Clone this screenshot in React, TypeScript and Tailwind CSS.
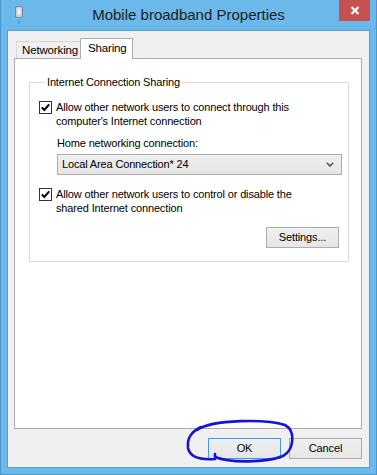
import { ReactNode } from 'react'

const font = { fontFamily: '"Liberation Sans", Arial, sans-serif' }

const CheckBox = () => (
  <div className="w-[13px] h-[13px] shrink-0 border border-[#333333] bg-white flex items-center justify-center">
    <svg width="11" height="11" viewBox="0 0 11 11">
      <path d="M1.8 5.4 L4.3 8 L9.2 2.4" fill="none" stroke="#000" strokeWidth="2" />
    </svg>
  </div>
)

const CheckRow = ({ children }: { children: ReactNode }) => (
  <div className="flex gap-[4px]">
    <div className="pt-[1px]">
      <CheckBox />
    </div>
    <div className="leading-[14px]">{children}</div>
  </div>
)

const Button = ({ label, focused }: { label: string; focused?: boolean }) => (
  <div
    className={
      'w-[73px] h-[21px] flex items-center justify-center border bg-gradient-to-b from-[#f0f0f0] to-[#e5e5e5] ' +
      (focused ? 'border-[#3c9af0]' : 'border-[#acacac]')
    }
  >
    {label}
  </div>
)

const App = () => {
  return (
    <div
      className="relative w-[377px] h-[475px] bg-[#6bb8eb] border border-t-0 border-[#4f96c8] flex flex-col text-[11px] tracking-[-0.15px] text-black"
      style={font}
    >
      <div className="h-[30px] grid grid-cols-[1fr_auto_1fr] items-start">
        <div className="pl-[12px] pt-[5px]">
          <svg width="12" height="19" viewBox="0 0 12 19">
            <rect x="2.5" y="1.5" width="7" height="11" rx="1.5" fill="#c9cfd8" stroke="#7c8594" strokeWidth="1" />
            <rect x="4.5" y="3.5" width="3" height="6" fill="#eef1f5" />
            <rect x="5.5" y="12" width="1" height="7" fill="#2aa0e6" />
            <rect x="4.5" y="13" width="3" height="2" fill="#6fc6f5" />
          </svg>
        </div>
        <div className="pt-[6px] text-[15px] tracking-normal text-[#1e1e1e] leading-[18px]">
          Mobile broadband Properties
        </div>
        <div className="flex justify-end pr-[6px]">
          <div className="w-[31px] h-[21px] bg-[#c75050] flex items-center justify-center">
            <svg width="10" height="9" viewBox="0 0 10 9">
              <path d="M1.5 1 L8.5 8 M8.5 1 L1.5 8" stroke="#fff" strokeWidth="2.2" />
            </svg>
          </div>
        </div>
      </div>

      <div className="flex-1 mx-[6px] mb-[6px] border border-[#5a9fd4] bg-[#f0f0f0] flex flex-col pt-[7px] pl-[6px] pr-[7px] pb-[8px]">
        <div className="flex items-end pl-[2px] h-[21px] -mb-px">
          <div className="h-[18px] w-[64px] border border-[#d9d9d9] border-r-0 bg-[#f0f0f0] pl-[5px] leading-[17px] text-[11.5px]">
            Networking
          </div>
          <div className="relative z-10 h-[21px] w-[53px] border border-b-0 border-[#acacac] bg-white pl-[7px] pt-[2px] leading-[15px] text-[11.5px]">
            Sharing
          </div>
        </div>
        <div className="flex-1 border border-[#acacac] bg-white pl-[14px] pr-[12px] pt-[17px]">
          <fieldset className="border border-[#dcdcdc] pl-[9px] pr-[6px] pb-[13px]">
            <legend className="ml-[6px] px-[2px] leading-[13px]">Internet Connection Sharing</legend>
            <div className="mt-[11px]">
              <CheckRow>
                Allow other network users to connect through this
                <br />
                computer's Internet connection
              </CheckRow>
            </div>
            <div className="ml-[18px] mt-[8px] leading-[14px]">Home networking connection:</div>
            <div className="ml-[18px] mt-[4px] h-[21px] border border-[#acacac] bg-gradient-to-b from-[#f0f0f0] to-[#e5e5e5] flex items-center justify-between pl-[4px] pr-[7px]">
              <span>Local Area Connection* 24</span>
              <svg width="8" height="5" viewBox="0 0 8 5">
                <path d="M0.8 0.8 L4 4 L7.2 0.8" fill="none" stroke="#555" strokeWidth="1.6" />
              </svg>
            </div>
            <div className="mt-[12px]">
              <CheckRow>
                Allow other network users to control or disable the
                <br />
                shared Internet connection
              </CheckRow>
            </div>
            <div className="flex justify-end mt-[12px] pr-[3px]">
              <Button label="Settings..." />
            </div>
          </fieldset>
        </div>
        <div className="flex justify-end gap-[8px] mt-[9px]">
          <Button label="OK" focused />
          <Button label="Cancel" />
        </div>
      </div>

      <svg className="absolute left-0 top-0 pointer-events-none" width="377" height="475" viewBox="0 0 377 475">
        <path
          d="M196 430 C212 419 266 419 284 425 C295 431 293 450 282 456 C265 463 228 463 214 457 L214 454 M214 459 C200 460 189 458 187 448 C186 438 190 432 200 427"
          fill="none"
          stroke="#1414d2"
          strokeWidth="2.6"
          strokeLinecap="round"
          strokeLinejoin="round"
        />
      </svg>
    </div>
  )
}

export default App
